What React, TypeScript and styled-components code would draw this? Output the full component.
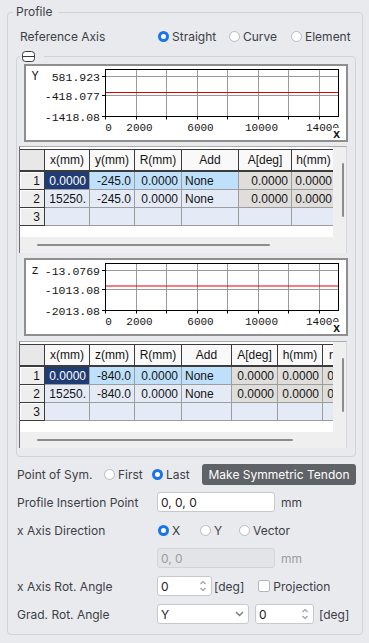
import React from "react";
import styled, { createGlobalStyle } from "styled-components";

const GlobalStyle = createGlobalStyle`
  html, body { margin: 0; padding: 0; background: #e9eaee; }
  body { font-family: Inter, "Noto Sans", Arial, sans-serif; font-size: 12px; color: #3d4046; }
  *, *::before, *::after { box-sizing: border-box; }
`;

const Page = styled.div`
  width: 369px;
  height: 643px;
  padding: 4px 0 0 7px;
  overflow: hidden;
`;

const Panel = styled.fieldset`
  width: 356px;
  margin: 0;
  padding: 0 6px 10px 9px;
  border: 1px solid #d1d3d8;
  border-radius: 4px;
  min-width: 0;
`;

const PanelLegend = styled.legend`
  margin-left: -4px;
  padding: 0 6px 0 3px;
  font-size: 12px;
  line-height: 16px;
  color: #3d4046;
`;

const Row = styled.div<{ $top: number; $h?: number; $indent?: number }>`
  display: flex;
  align-items: center;
  height: ${(p) => p.$h ?? 20}px;
  margin-top: ${(p) => p.$top}px;
  padding-left: ${(p) => p.$indent ?? 0}px;
`;

const Label = styled.span<{ $w: number }>`
  flex: 0 0 ${(p) => p.$w}px;
  white-space: nowrap;
  color: #3d4046;
`;

const RadioOption = styled.span<{ $w?: number }>`
  display: inline-flex;
  align-items: center;
  gap: 3px;
  white-space: nowrap;
  color: #3d4046;
  ${(p) => (p.$w ? `flex: 0 0 ${p.$w}px;` : "")}
`;

const RadioDot = styled.span<{ $on?: boolean }>`
  width: 11px;
  height: 11px;
  border-radius: 50%;
  background: #fff;
  border: ${(p) => (p.$on ? "3px solid #1a73e8" : "1px solid #b8bbc1")};
`;

const Group = styled.fieldset`
  margin: 5px 0 0 -1px;
  padding: 0 0 8px 0;
  border: 1px solid #d1d3d8;
  border-radius: 4px;
  min-width: 0;
`;

const GroupLegend = styled.legend`
  margin-left: 3px;
  padding: 0 9px 0 2px;
  height: 11px;
  line-height: 0;
  svg { display: block; }
`;

const ChartBox = styled.div<{ $top: number }>`
  margin: ${(p) => p.$top}px 0 0 7px;
  width: 324px;
  height: 78px;
  background: #fff;
  border: 2px solid #8f8f8f;
  svg { display: block; }
`;

const GridFrame = styled.div<{ $top: number }>`
  margin: ${(p) => p.$top}px 0 0 2px;
  width: 328px;
  height: 107px;
  display: grid;
  grid-template-columns: 313px 1fr;
  grid-template-rows: 90px 1fr;
  background: #efefef;
  border-top: 1px solid #ababab;
  border-left: 1px solid #6f6f6f;
  border-right: 1px solid #d8d8d8;
`;

const Viewport = styled.div`
  background: #fff;
  padding-top: 2px;
  overflow: hidden;
`;

const Table = styled.table<{ $w: number }>`
  width: ${(p) => p.$w}px;
  border-collapse: separate;
  border-spacing: 0;
  table-layout: fixed;
  font-family: "Liberation Sans", Arial, sans-serif;
  font-size: 12px;
  color: #141414;
`;

const HeadRow = styled.tr`
  height: 23px;
`;

const DataRow = styled.tr`
  height: 18px;
`;

const HeadCell = styled.th<{ $corner?: boolean }>`
  padding: 0;
  font-weight: normal;
  text-align: center;
  white-space: nowrap;
  overflow: hidden;
  background: ${(p) => (p.$corner ? "#e8e8e8" : "#f9f9f9")};
  border-top: 1px solid #3c3c3c;
  border-right: 1px solid #3c3c3c;
  border-bottom: 2px solid #3c3c3c;
`;

const RowHead = styled.th`
  padding: 0 4px 0 0;
  font-weight: normal;
  text-align: right;
  background: #eeeeee;
  border-right: 1px solid #3c3c3c;
  border-bottom: 1px solid #3c3c3c;
  box-shadow: inset 1px 1px 0 #ffffff;
`;

type Tone = "sel" | "blue" | "light" | "grey";

const toneBg: Record<Tone, string> = {
  sel: "#1f3d74",
  blue: "#bfe0fa",
  light: "#e4ebf6",
  grey: "#dfdedb",
};

const Cell = styled.td<{ $tone: Tone; $left?: boolean }>`
  padding: 0 3px;
  white-space: nowrap;
  overflow: hidden;
  text-align: ${(p) => (p.$left ? "left" : "right")};
  background: ${(p) => toneBg[p.$tone]};
  color: ${(p) => (p.$tone === "sel" ? "#ffffff" : "#141414")};
  border-right: 1px solid #9d9d9d;
  border-bottom: 1px solid #9d9d9d;
`;

const VTrack = styled.div`
  grid-row: 1 / 3;
  grid-column: 2;
  padding: 16px 0 0 9px;
`;

const HTrack = styled.div`
  grid-row: 2;
  grid-column: 1;
  padding: 7px 0 0 17px;
`;

const Thumb = styled.div<{ $w: number; $h: number }>`
  width: ${(p) => p.$w}px;
  height: ${(p) => p.$h}px;
  background: #8c8c8c;
  border-radius: 1px;
`;

const ActionButton = styled.button`
  width: 154px;
  height: 21px;
  padding: 0;
  border: none;
  border-radius: 3px;
  background: #5f6267;
  color: #ffffff;
  font-family: Inter, "Noto Sans", Arial, sans-serif;
  font-size: 12px;
`;

const TextField = styled.div<{ $w: number; $disabled?: boolean }>`
  flex: 0 0 ${(p) => p.$w}px;
  height: 20px;
  display: flex;
  align-items: center;
  padding: 0 4px 0 3px;
  border: 1px solid ${(p) => (p.$disabled ? "#d2d4d8" : "#c6c9ce")};
  border-radius: 3px;
  background: ${(p) => (p.$disabled ? "#e3e4e8" : "#ffffff")};
  color: ${(p) => (p.$disabled ? "#9a9da3" : "#222222")};
  white-space: nowrap;
`;

const FieldText = styled.span`
  flex: 1;
`;

const Unit = styled.span<{ $gap: number; $muted?: boolean }>`
  margin-left: ${(p) => p.$gap}px;
  color: ${(p) => (p.$muted ? "#9a9da3" : "#3d4046")};
  white-space: nowrap;
`;

const CheckBox = styled.span`
  width: 12px;
  height: 12px;
  border: 1px solid #b3b6bc;
  border-radius: 2px;
  background: #fff;
  margin-left: 14px;
  margin-right: 3px;
`;

const Spacer = styled.span<{ $w: number }>`
  flex: 0 0 ${(p) => p.$w}px;
`;

const GRID_X = [0, 1, 2, 3, 4, 5, 6, 7].map((k) => Math.round(79 + 30.5 * k) + 0.5);
const GRID_Y = [10.5, 29.5, 50.5];
const X_LABELS: [string, number][] = [
  ["0", 82.5],
  ["2000", 113.5],
  ["6000", 174.5],
  ["10000", 235.5],
  ["14000", 296.5],
];

function AxisChart({ axis, yTicks, redY, top }: { axis: string; yTicks: string[]; redY: number; top: number }) {
  return (
    <ChartBox $top={top}>
      <svg width={320} height={74} viewBox="0 0 320 74">
        {GRID_X.slice(1).map((x) => (
          <line key={x} x1={x} y1={3.5} x2={x} y2={50.5} stroke="#9a9a9a" strokeWidth={1} />
        ))}
        {GRID_Y.slice(0, 2).map((y) => (
          <line key={y} x1={79.5} y1={y} x2={312.5} y2={y} stroke="#9a9a9a" strokeWidth={1} />
        ))}
        <line x1={79.5} y1={redY} x2={312.5} y2={redY} stroke="#e60000" strokeWidth={1.2} />
        <rect x={79.5} y={3.5} width={233} height={47} fill="none" stroke="#000" strokeWidth={1} />
        {GRID_X.map((x) => (
          <line key={"t" + x} x1={x} y1={50.5} x2={x} y2={53.5} stroke="#000" strokeWidth={1} />
        ))}
        {GRID_Y.map((y) => (
          <line key={"ty" + y} x1={76} y1={y} x2={79.5} y2={y} stroke="#000" strokeWidth={1} />
        ))}
        <g fontFamily='"Liberation Mono", "DejaVu Sans Mono", monospace' fill="#151515">
          <text x={9} y={14} fontSize={12} textAnchor="middle">{axis}</text>
          {yTicks.map((t, i) => (
            <text key={t} x={74} y={GRID_Y[i] + 4} fontSize={11.5} textAnchor="end">{t}</text>
          ))}
          {X_LABELS.map(([t, x]) => (
            <text key={t} x={x} y={65} fontSize={11} textAnchor="middle">{t}</text>
          ))}
          <rect x={306} y={62} width={10} height={12} fill="#fff" />
          <text x={310.5} y={72} fontSize={12} fontWeight="bold" textAnchor="middle">x</text>
        </g>
      </svg>
    </ChartBox>
  );
}

type CellData = { v: string; tone: Tone; left?: boolean };

function DataGrid({
  top,
  cols,
  heads,
  rows,
  hThumb,
}: {
  top: number;
  cols: number[];
  heads: string[];
  rows: CellData[][];
  hThumb: number;
}) {
  const total = cols.reduce((a, b) => a + b, 0);
  return (
    <GridFrame $top={top}>
      <Viewport>
        <Table $w={total}>
          <colgroup>
            {cols.map((w, i) => (
              <col key={i} style={{ width: w }} />
            ))}
          </colgroup>
          <thead>
            <HeadRow>
              <HeadCell $corner />
              {heads.map((h) => (
                <HeadCell key={h}>{h}</HeadCell>
              ))}
            </HeadRow>
          </thead>
          <tbody>
            {rows.map((r, i) => (
              <DataRow key={i}>
                <RowHead>{i + 1}</RowHead>
                {r.map((c, j) => (
                  <Cell key={j} $tone={c.tone} $left={c.left}>
                    {c.v}
                  </Cell>
                ))}
              </DataRow>
            ))}
          </tbody>
        </Table>
      </Viewport>
      <VTrack>
        <Thumb $w={2} $h={54} />
      </VTrack>
      <HTrack>
        <Thumb $w={hThumb} $h={2} />
      </HTrack>
    </GridFrame>
  );
}

function MinimizeIcon() {
  return (
    <svg width={13} height={11} viewBox="0 0 13 11">
      <rect x={0.5} y={0.5} width={12} height={10} rx={3} fill="#fff" stroke="#3a3a3a" strokeWidth={1} />
      <line x1={0.5} y1={5.5} x2={12.5} y2={5.5} stroke="#3a3a3a" strokeWidth={1} />
    </svg>
  );
}

function SpinArrows() {
  return (
    <svg width={8} height={14} viewBox="0 0 8 14">
      <path d="M1.5 5 L4 2.5 L6.5 5" fill="none" stroke="#9a9da3" strokeWidth={1.2} />
      <path d="M1.5 9 L4 11.5 L6.5 9" fill="none" stroke="#9a9da3" strokeWidth={1.2} />
    </svg>
  );
}

function ChevronDown() {
  return (
    <svg width={9} height={6} viewBox="0 0 9 6">
      <path d="M1 1 L4.5 4.5 L8 1" fill="none" stroke="#77797e" strokeWidth={1.4} />
    </svg>
  );
}

const yRows = (y: string): CellData[][] => [
  [
    { v: "0.0000", tone: "sel" },
    { v: y, tone: "blue" },
    { v: "0.0000", tone: "blue" },
    { v: "None", tone: "blue", left: true },
    { v: "0.0000", tone: "grey" },
    { v: "0.0000", tone: "grey" },
  ],
  [
    { v: "15250.", tone: "light" },
    { v: y, tone: "light" },
    { v: "0.0000", tone: "light" },
    { v: "None", tone: "light", left: true },
    { v: "0.0000", tone: "grey" },
    { v: "0.0000", tone: "grey" },
  ],
  [
    { v: "", tone: "light" },
    { v: "", tone: "light" },
    { v: "", tone: "light" },
    { v: "", tone: "light" },
    { v: "", tone: "light" },
    { v: "", tone: "light" },
  ],
];

const zRows: CellData[][] = yRows("-840.0").map((r, i) => [
  ...r,
  i === 2 ? { v: "", tone: "light" as Tone } : { v: "0.0000", tone: "grey" as Tone },
]);

export default function App() {
  return (
    <>
      <GlobalStyle />
      <Page>
        <Panel>
          <PanelLegend>Profile</PanelLegend>
          <Row $top={6} $indent={3}>
            <Label $w={138}>Reference Axis</Label>
            <RadioOption $w={71}>
              <RadioDot $on />
              Straight
            </RadioOption>
            <RadioOption $w={62}>
              <RadioDot />
              Curve
            </RadioOption>
            <RadioOption>
              <RadioDot />
              Element
            </RadioOption>
          </Row>

          <Group>
            <GroupLegend>
              <MinimizeIcon />
            </GroupLegend>
            <AxisChart top={2} axis="Y" yTicks={["581.923", "-418.077", "-1418.08"]} redY={26.5} />
            <DataGrid
              top={4}
              cols={[25, 45, 45, 47, 57, 53, 44]}
              heads={["x(mm)", "y(mm)", "R(mm)", "Add", "A[deg]", "h(mm)"]}
              rows={yRows("-245.0")}
              hThumb={233}
            />
            <AxisChart top={5} axis="z" yTicks={["-13.0769", "-1013.08", "-2013.08"]} redY={26} />
            <DataGrid
              top={5}
              cols={[25, 45, 45, 47, 50, 46, 45, 45]}
              heads={["x(mm)", "z(mm)", "R(mm)", "Add", "A[deg]", "h(mm)", "r(mm)"]}
              rows={zRows}
              hThumb={256}
            />
          </Group>

          <Row $top={7} $h={21}>
            <Label $w={87}>Point of Sym.</Label>
            <RadioOption $w={48}>
              <RadioDot />
              First
            </RadioOption>
            <RadioOption $w={50}>
              <RadioDot $on />
              Last
            </RadioOption>
            <ActionButton>Make Symmetric Tendon</ActionButton>
          </Row>

          <Row $top={7}>
            <Label $w={140}>Profile Insertion Point</Label>
            <TextField $w={118}>
              <FieldText>0, 0, 0</FieldText>
            </TextField>
            <Unit $gap={6}>mm</Unit>
          </Row>

          <Row $top={8}>
            <Label $w={141}>x Axis Direction</Label>
            <RadioOption $w={42}>
              <RadioDot $on />
              X
            </RadioOption>
            <RadioOption $w={39}>
              <RadioDot />
              Y
            </RadioOption>
            <RadioOption>
              <RadioDot />
              Vector
            </RadioOption>
          </Row>

          <Row $top={8}>
            <Spacer $w={140} />
            <TextField $w={118} $disabled>
              <FieldText>0, 0</FieldText>
            </TextField>
            <Unit $gap={6} $muted>
              mm
            </Unit>
          </Row>

          <Row $top={8}>
            <Label $w={140}>x Axis Rot. Angle</Label>
            <TextField $w={55}>
              <FieldText>0</FieldText>
              <SpinArrows />
            </TextField>
            <Unit $gap={2}>[deg]</Unit>
            <CheckBox />
            <Unit $gap={0}>Projection</Unit>
          </Row>

          <Row $top={8}>
            <Label $w={140}>Grad. Rot. Angle</Label>
            <TextField $w={92}>
              <FieldText>Y</FieldText>
              <ChevronDown />
            </TextField>
            <Spacer $w={6} />
            <TextField $w={59}>
              <FieldText>0</FieldText>
              <SpinArrows />
            </TextField>
            <Unit $gap={5}>[deg]</Unit>
          </Row>
        </Panel>
      </Page>
    </>
  );
}
